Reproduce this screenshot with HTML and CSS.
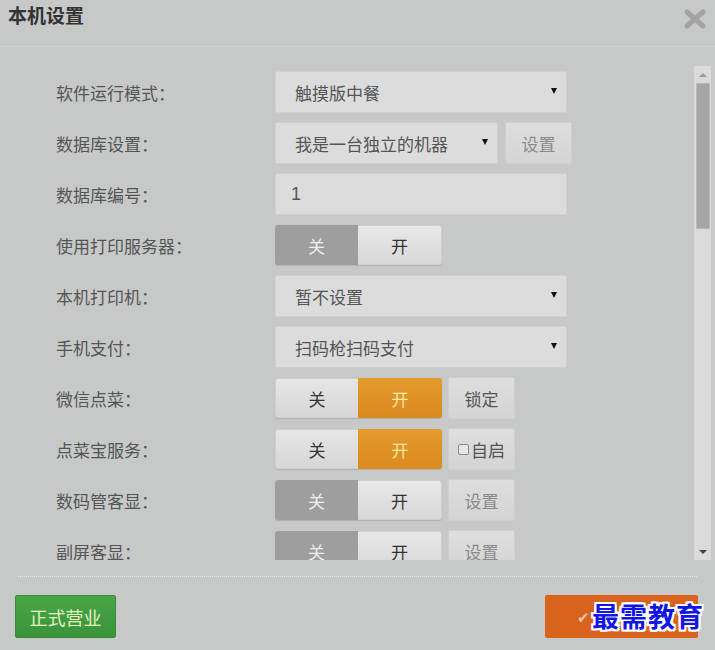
FILE: index.html
```html
<!DOCTYPE html>
<html lang="zh-CN">
<head>
<meta charset="utf-8">
<title>本机设置</title>
<link rel="stylesheet" href="styles.css">
</head>
<body>
<div class="dialog">
  <div class="header">
    <h1 class="title">本机设置</h1>
    <span class="close"><svg width="22" height="20" viewBox="0 0 22 20"><path d="M3 3 L19 17 M19 3 L3 17" stroke="#a3a3a3" stroke-width="5" stroke-linecap="round"/></svg></span>
  </div>
  <div class="body">
    <div class="viewport">
      <div class="form">
        <div class="row"><div class="label">软件运行模式：</div><div class="select w292"><span>触摸版中餐</span><i class="arrow"></i></div></div>
        <div class="row"><div class="label">数据库设置：</div><div class="select w223"><span>我是一台独立的机器</span><i class="arrow"></i></div><div class="btn w66">设置</div></div>
        <div class="row"><div class="label">数据库编号：</div><div class="select w292 input"><span>1</span></div></div>
        <div class="row"><div class="label">使用打印服务器：</div><div class="toggle off"><span class="a">关</span><span class="b">开</span></div></div>
        <div class="row"><div class="label">本机打印机：</div><div class="select w292"><span>暂不设置</span><i class="arrow"></i></div></div>
        <div class="row"><div class="label">手机支付：</div><div class="select w292"><span>扫码枪扫码支付</span><i class="arrow"></i></div></div>
        <div class="row"><div class="label">微信点菜：</div><div class="toggle on"><span class="a">关</span><span class="b">开</span></div><div class="btn dark">锁定</div></div>
        <div class="row"><div class="label">点菜宝服务：</div><div class="toggle on"><span class="a">关</span><span class="b">开</span></div><div class="btn dark"><i class="chk"></i>自启</div></div>
        <div class="row"><div class="label">数码管客显：</div><div class="toggle off"><span class="a">关</span><span class="b">开</span></div><div class="btn">设置</div></div>
        <div class="row"><div class="label">副屏客显：</div><div class="toggle off"><span class="a">关</span><span class="b">开</span></div><div class="btn">设置</div></div>
      </div>
      <div class="scrollbar">
        <div class="sb-btn"><i class="up"></i></div>
        <div class="sb-track"><div class="sb-thumb"></div></div>
        <div class="sb-btn"><i class="down"></i></div>
      </div>
    </div>
  </div>
  <div class="divider"></div>
  <div class="footer">
    <div class="green">正式营业</div>
    <div class="orange"><span class="check">✔</span><span class="otext">确定</span><span class="watermark">最需教育</span></div>
  </div>
</div>
</body>
</html>
```
FILE: styles.css
```css
* { box-sizing: border-box; }
html, body { margin: 0; padding: 0; }
body {
  background: #c7c9c8;
  font-family: "Noto Sans CJK SC", "Noto Sans", sans-serif;
  width: 715px;
  height: 650px;
  overflow: hidden;
}
.dialog { width: 715px; height: 650px; }
.header {
  height: 47px;
  display: flex;
  justify-content: space-between;
  align-items: flex-start;
  border-bottom: 1px solid #d2d4d3;
}
.title {
  margin: 0;
  padding: 1px 0 0 8px;
  font-size: 19px;
  font-weight: 700;
  color: #333;
  line-height: 27px;
}
.close { padding: 9px 9px 0 0; }
.close svg { display: block; }

.body { padding-top: 19px; }
.viewport {
  height: 494px;
  display: flex;
  overflow: hidden;
}
.form {
  flex: 1;
  padding: 5px 0 0 56px;
}
.row {
  display: flex;
  align-items: center;
  height: 42px;
  margin-bottom: 9px;
}
.label {
  width: 219px;
  font-size: 17px;
  color: #555;
  flex: none;
}
.select {
  height: 42px;
  background: #dcdcdc;
  border: 1px solid #d0d0d0;
  border-radius: 2px;
  display: flex;
  align-items: center;
  justify-content: space-between;
  padding: 0 9px 0 19px;
  font-size: 17px;
  color: #555;
}
.select.input { padding-left: 15px; font-family: "Liberation Sans", "Noto Sans CJK SC", sans-serif; font-size: 18px; }
.w292 { width: 292px; }
.w223 { width: 223px; }
.arrow {
  width: 0; height: 0;
  border-left: 3px solid transparent;
  border-right: 3px solid transparent;
  border-top: 6px solid #111;
  margin-top: -2px;
}
.btn {
  margin-left: 6px;
  width: 67px;
  height: 42px;
  display: flex;
  align-items: center;
  justify-content: center;
  background: linear-gradient(#dedede, #d4d4d4);
  border: 1px solid #cfcfcf;
  border-radius: 2px;
  font-size: 17px;
  color: #8a8a8a;
}
.btn.w66 { width: 67px; margin-left: 7px; }
.btn.dark { color: #555; }
.chk {
  width: 11px; height: 11px;
  border: 1px solid #888;
  border-radius: 2px;
  background: #e6e6e6;
  margin-right: 2px;
}
.toggle {
  width: 167px;
  height: 40px;
  display: flex;
  border-radius: 3px;
  overflow: hidden;
  font-size: 17px;
  box-shadow: 0 1px 1px rgba(0,0,0,0.12);
}
.toggle span {
  flex: 1;
  display: flex;
  align-items: center;
  justify-content: center;
}
.toggle .a { flex: 0 0 83px; }
.toggle.off .a { background: #9e9e9e; color: #eeeeee; }
.toggle.off .b { background: linear-gradient(#e8e8e8, #d8d8d8); color: #333; border: 1px solid #cfcfcf; border-left: 0; border-radius: 0 3px 3px 0; }
.toggle.on .a { background: linear-gradient(#e6e6e6, #d6d6d6); color: #333; border: 1px solid #cfcfcf; border-right: 0; border-radius: 3px 0 0 3px; }
.toggle.on .b { background: linear-gradient(#e49a2c, #db8a1c); color: #f7e7a6; }

.scrollbar {
  width: 17px;
  margin-right: 4px;
  background: #dbdbdb;
  display: flex;
  flex-direction: column;
}
.sb-btn {
  height: 17px;
  display: flex;
  align-items: center;
  justify-content: center;
}
.up { width: 0; height: 0; border-left: 4px solid transparent; border-right: 4px solid transparent; border-bottom: 4px solid #9a9a9a; }
.down { width: 0; height: 0; border-left: 4px solid transparent; border-right: 4px solid transparent; border-top: 4px solid #444; }
.sb-track { flex: 1; padding: 0 1px 0 2px; }
.sb-thumb { height: 146px; background: #a6a6a6; border: 1px solid #b8b8b8; }

.divider {
  margin: 16px 18px 0 18px;
  border-top: 1px dotted #e6e6e6;
}
.footer {
  display: flex;
  justify-content: space-between;
  padding: 18px 17px 0 15px;
}
.green {
  width: 101px;
  height: 43px;
  background: linear-gradient(#47a647, #3a933a);
  border: 1px solid #3a8a3a;
  border-radius: 2px;
  color: #e4f3c4;
  font-size: 18px;
  display: flex;
  align-items: center;
  justify-content: center;
}
.orange {
  position: relative;
  width: 153px;
  height: 43px;
  background: #d9621c;
  border-radius: 2px;
  display: flex;
  align-items: center;
  padding-left: 32px;
  font-size: 17px;
  color: #e9c8ac;
}
.check { font-size: 15px; margin-right: 4px; }
.otext { visibility: visible; }
.watermark {
  position: absolute;
  left: 47px;
  top: 3px;
  white-space: nowrap;
  font-size: 27px;
  font-weight: 700;
  line-height: 36px;
  color: #1216e4;
  letter-spacing: 1px;
  text-shadow: -2px -2px 0 #fff, 2px -2px 0 #fff, -2px 2px 0 #fff, 2px 2px 0 #fff, 0 2px 0 #fff, 0 -2px 0 #fff, 2px 0 0 #fff, -2px 0 0 #fff;
}
```
